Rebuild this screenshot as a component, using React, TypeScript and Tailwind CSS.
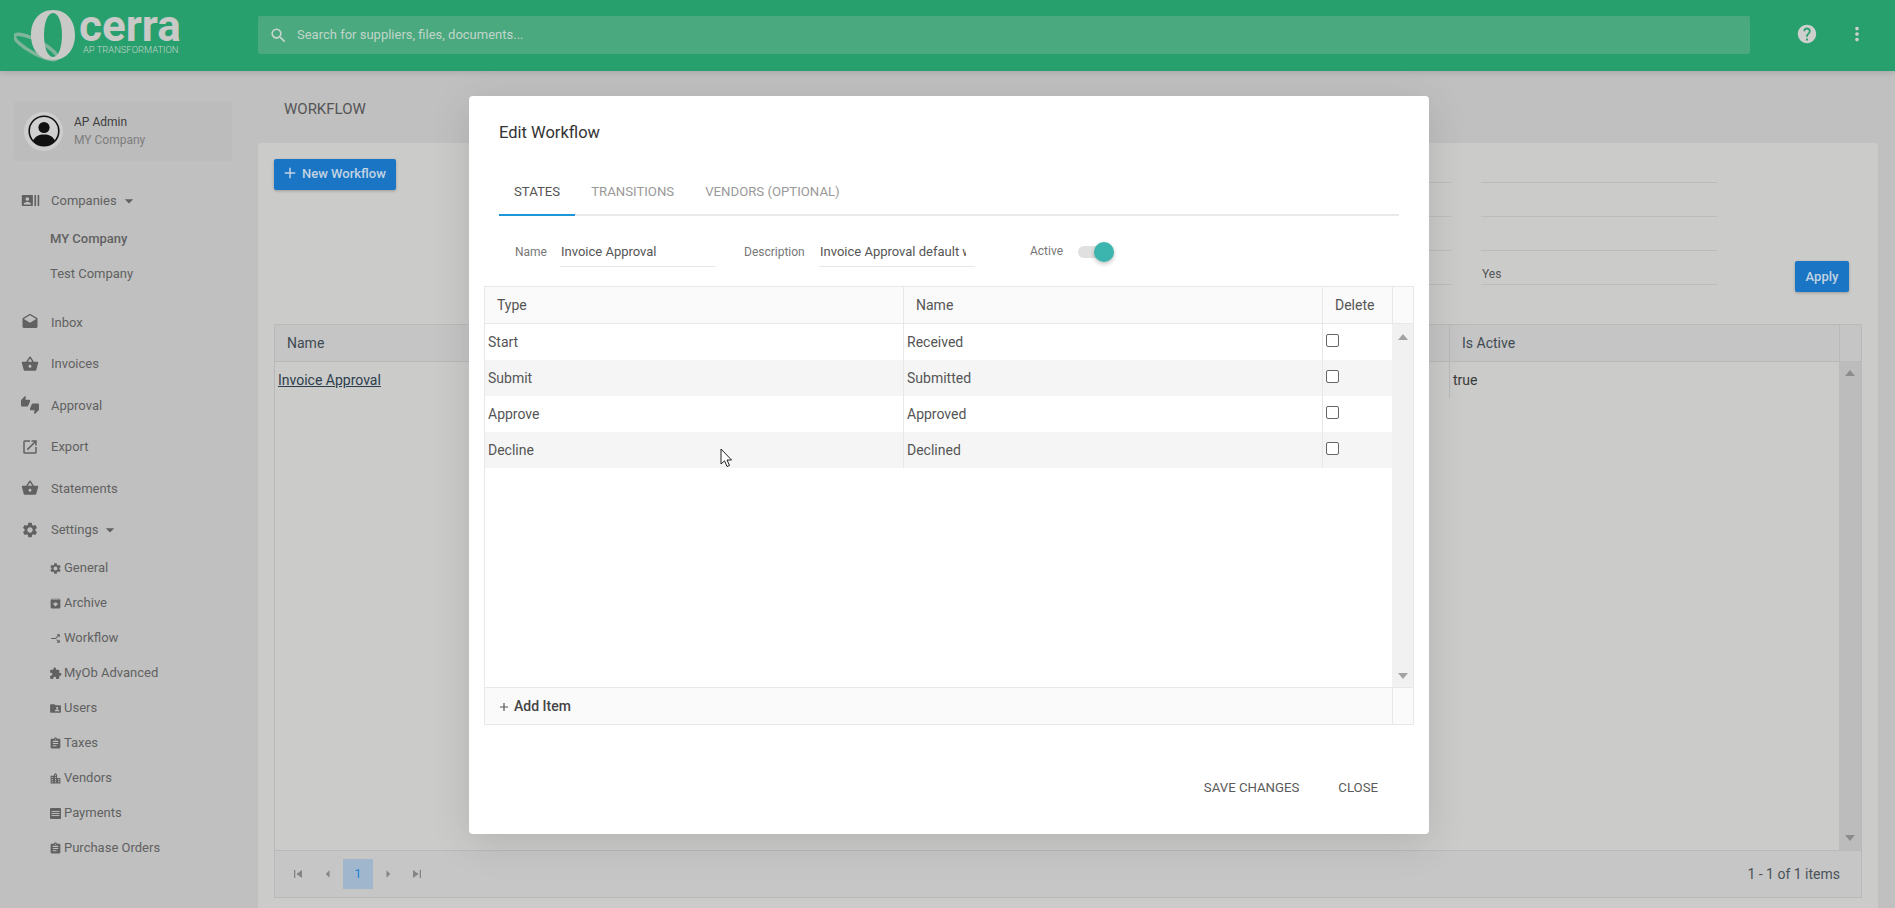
import React from "react";
import {
  MdRecentActors,
  MdDrafts,
  MdShoppingBasket,
  MdThumbsUpDown,
  MdOpenInNew,
  MdSettings,
  MdArchive,
  MdCallSplit,
  MdExtension,
  MdFolderShared,
  MdAssignment,
  MdLocationCity,
  MdSearch,
  MdHelp,
  MdMoreVert,
  MdArrowDropDown,
  MdAdd,
  MdSkipPrevious,
  MdSkipNext,
  MdArrowLeft,
  MdArrowRight,
} from "react-icons/md";

const PaymentsIcon = ({ size, className }: { size: number; className?: string }) => (
  <svg width={size} height={size} viewBox="0 0 13 13" className={className}>
    <rect x="1" y="1" width="11" height="11" rx="1" fill="currentColor" />
    <path d="M2.500 4.500h8M2.500 6.500h8M2.500 8.500h8" stroke="#c0c0c0" strokeWidth="0.9" />
  </svg>
);

const topItems = [
  { label: "Inbox", icon: MdDrafts },
  { label: "Invoices", icon: MdShoppingBasket },
  { label: "Approval", icon: MdThumbsUpDown },
  { label: "Export", icon: MdOpenInNew },
  { label: "Statements", icon: MdShoppingBasket },
];

const settingsItems = [
  { label: "General", icon: MdSettings },
  { label: "Archive", icon: MdArchive },
  { label: "Workflow", icon: MdCallSplit, rotate: true },
  { label: "MyOb Advanced", icon: MdExtension },
  { label: "Users", icon: MdFolderShared },
  { label: "Taxes", icon: MdAssignment },
  { label: "Vendors", icon: MdLocationCity },
  { label: "Payments", icon: PaymentsIcon },
  { label: "Purchase Orders", icon: MdAssignment },
];

const states = [
  { type: "Start", name: "Received" },
  { type: "Submit", name: "Submitted" },
  { type: "Approve", name: "Approved" },
  { type: "Decline", name: "Declined" },
];

const Logo = () => (
  <div className="flex h-[71px] w-[258px] shrink-0 items-start pl-[14px]">
    <svg width="62" height="71" viewBox="0 0 62 71" className="shrink-0">
      <ellipse cx="22" cy="47" rx="24" ry="6.5" transform="rotate(28 22 47)" fill="none" stroke="#7fb59b" strokeWidth="3.5" />
      <path
        fillRule="evenodd"
        fill="#c9c9c7"
        d="M39 10C53 10 61 21 61 35C61 49 53 60 39 60C25 60 17 49 17 35C17 21 25 10 39 10ZM39 13C33 13 30 24 30 35C30 46 33 57 39 57C45 57 48 46 48 35C48 24 45 13 39 13Z"
      />
    </svg>
    <div className="ml-[3px] flex flex-col">
      <span className="mt-[8px] text-[44px] leading-[36px] font-bold text-[#c9c9c7]">cerra</span>
      <span className="pl-[4px] text-[9.4px] leading-[12px] font-light whitespace-nowrap text-[#c3d3ca]">
        AP TRANSFORMATION
      </span>
    </div>
  </div>
);

const Header = () => (
  <header className="relative z-10 flex h-[71px] shrink-0 items-start bg-[#28a06e] shadow-[0_2px_6px_rgba(0,0,0,0.12)]">
    <Logo />
    <div className="mt-4 flex h-[38px] w-[1492px] items-center rounded-[2px] bg-[#4aa97f] pl-[11px]">
      <MdSearch size={19} className="text-[#c9d6cf]" />
      <span className="ml-[9px] text-[13px] text-[#c2d5ca]">Search for suppliers, files, documents...</span>
    </div>
    <MdHelp size={22} className="mt-[23px] ml-[46px] text-[#cfcfcd]" />
    <MdMoreVert size={22} className="mt-[23px] ml-[28px] text-[#cfcfcd]" />
  </header>
);

const Sidebar = () => (
  <aside className="w-[258px] shrink-0 text-[#616161]">
    <div className="mt-[30px] mr-[26px] ml-[14px] flex h-[60px] items-center rounded-[2px] bg-[#bcbcbc] pl-[10px]">
      <div className="flex size-[39px] items-center justify-center rounded-full bg-[#cdcdcd]">
        <svg width="32" height="32" viewBox="0 0 32 32">
          <circle cx="16" cy="16" r="14.8" fill="#d0d0d0" stroke="#111" strokeWidth="1.6" />
          <circle cx="16" cy="12.5" r="5.6" fill="#111" />
          <path d="M5 26c2-5 6-6.500 11-6.500s9 1.500 11 6.500c-3 3-7 4.800-11 4.800S8 29 5 26z" fill="#111" />
        </svg>
      </div>
      <div className="ml-[11px] flex flex-col">
        <span className="text-[12px] leading-[18px] text-[#3d3d3d]">AP Admin</span>
        <span className="text-[12px] leading-[18px] text-[#7c7c7c]">MY Company</span>
      </div>
    </div>

    <nav className="mt-[19px]">
      <div className="flex h-[41.5px] items-center pl-[21px] text-[13px]">
        <MdRecentActors size={19} className="mr-[11px]" />
        <span>Companies</span>
        <MdArrowDropDown size={20} className="ml-[2px]" />
      </div>
      <div className="flex h-[35px] items-center pl-[50px] text-[13px] font-medium">MY Company</div>
      <div className="flex h-[35px] items-center pl-[50px] text-[13px]">Test Company</div>
      <div className="mt-[10px]">
        {topItems.map((item) => (
          <div key={item.label} className="flex h-[41.5px] items-center pl-[21px] text-[13px]">
            <item.icon size={18} className="mr-[12px]" />
            <span>{item.label}</span>
          </div>
        ))}
        <div className="flex h-[41.5px] items-center pl-[21px] text-[13px]">
          <MdSettings size={18} className="mr-[12px]" />
          <span>Settings</span>
          <MdArrowDropDown size={20} className="ml-[2px]" />
        </div>
      </div>
      {settingsItems.map((item) => (
        <div key={item.label} className="flex h-[35px] items-center pl-[49px] text-[13px]">
          <item.icon size={13} className={item.rotate ? "mr-[2px] rotate-90" : "mr-[2px]"} />
          <span>{item.label}</span>
        </div>
      ))}
    </nav>
  </aside>
);

const FilterColumn = ({ width, last }: { width: string; last?: string }) => (
  <div className={`flex flex-col ${width}`}>
    {[0, 1, 2, 3].map((i) => (
      <div key={i} className="flex h-[34px] items-center border-b border-[#bcbcbc] pt-[12px] pl-px text-[12px] text-[#555]">
        {i === 3 ? last : ""}
      </div>
    ))}
  </div>
);

const Grid = () => (
  <div className="mx-4 flex h-[574px] flex-col border border-[#b9b9b9]">
    <div className="flex h-[37px] shrink-0 border-b border-[#b9b9b9] bg-[#c5c5c5] text-[14px] text-[#3f4a52]">
      <div className="flex flex-1 items-center pl-3">Name</div>
      <div className="flex w-[390px] items-center border-l border-[#b9b9b9] pl-3">Is Active</div>
      <div className="w-[22px] border-l border-[#b9b9b9]"></div>
    </div>
    <div className="flex min-h-0 flex-1">
      <div className="flex h-[36px] flex-1 text-[14px] text-[#3a3a3a]">
        <div className="flex flex-1 items-center pl-[3px]">
          <a className="text-[#2c3e4e] underline">Invoice Approval</a>
        </div>
        <div className="flex w-[390px] items-center border-l border-[#b9b9b9] pl-[3px]">true</div>
      </div>
      <div className="flex w-[22px] flex-col items-center justify-between bg-[#bcbcbc] pt-[8px] pb-[9px]">
        <div className="size-0 border-x-[5px] border-b-[6px] border-x-transparent border-b-[#8c8c8c]"></div>
        <div className="size-0 border-x-[5px] border-t-[6px] border-x-transparent border-t-[#8c8c8c]"></div>
      </div>
    </div>
    <div className="flex h-[47px] shrink-0 items-center border-t border-[#b9b9b9] bg-[#c6c6c6] pr-[21px] pl-[7px] text-[14px] text-[#4a5258]">
      <button className="flex w-[31px] justify-center text-[#858585]"><MdSkipPrevious size={16} /></button>
      <button className="flex w-[30px] justify-center text-[#858585]"><MdArrowLeft size={18} /></button>
      <span className="flex size-[30px] items-center justify-center bg-[#a0b6cd] text-[13px] text-[#1f87d0]">1</span>
      <button className="flex w-[29px] justify-center text-[#858585]"><MdArrowRight size={18} /></button>
      <button className="flex w-[30px] justify-center text-[#858585]"><MdSkipNext size={16} /></button>
      <span className="ml-auto">1 - 1 of 1 items</span>
    </div>
  </div>
);

const Main = () => (
  <main className="flex min-w-0 flex-1 flex-col">
    <div className="flex h-[72px] shrink-0 items-center pt-[4px] pl-[26px] text-[15px] text-[#555]">WORKFLOW</div>
    <section className="mr-[17px] flex-1 rounded-t-[2px] bg-[#cbcbc9]">
      <div className="flex h-[181px] pt-4 pr-[29px] pl-4">
        <button className="flex h-[31px] w-[122px] items-center self-start rounded-[2px] bg-[#1a76c4] pb-[2px] pl-[7px] text-[13px] font-medium text-[#c3d3e3] shadow-[0_1px_3px_rgba(0,0,0,0.25)]">
          <MdAdd size={18} className="mr-[2px] -translate-y-px" />
          <span className="ml-[1px]">New Workflow</span>
        </button>
        <div className="-mt-[10px] ml-auto flex gap-[30px]">
          <FilterColumn width="w-[200px]" />
          <FilterColumn width="w-[236px]" last="Yes" />
        </div>
        <button className="mt-[102px] ml-[78px] h-[31px] w-[54px] self-start rounded-[2px] bg-[#1a76c4] text-[13px] font-medium text-[#c3d3e3] shadow-[0_1px_3px_rgba(0,0,0,0.25)]">
          Apply
        </button>
      </div>
      <Grid />
    </section>
  </main>
);

const Field = ({ label, value, labelClass }: { label: string; value: string; labelClass: string }) => (
  <div className="flex items-center">
    <label className={`text-[12px] text-[#777] ${labelClass}`}>{label}</label>
    <input
      readOnly
      value={value}
      className="h-[31px] w-[156px] border-b border-[#e8e8e8] pr-[9px] pl-px text-[13px] text-[#555] outline-none"
    />
  </div>
);

const StatesTable = () => (
  <div className="mx-[15px] mt-[19px] flex h-[439px] flex-col border border-[#e8e8e8] text-[14px] text-[#555]">
    <div className="flex h-[37px] shrink-0 border-b border-[#e8e8e8] bg-[#fafafa]">
      <div className="flex w-[419px] items-center border-r border-[#e8e8e8] pl-3">Type</div>
      <div className="flex w-[419px] items-center border-r border-[#e8e8e8] pl-3">Name</div>
      <div className="flex w-[70px] items-center border-r border-[#e8e8e8] pl-3">Delete</div>
      <div className="flex-1"></div>
    </div>
    <div className="flex min-h-0 flex-1">
      <div className="flex-1">
        {states.map((row, i) => (
          <div key={row.type} className={`flex h-[36px] ${i % 2 === 1 ? "bg-[#f5f5f5]" : ""}`}>
            <div className="flex w-[419px] items-center border-r border-[#e8e8e8] pl-[3px]">{row.type}</div>
            <div className="flex w-[419px] items-center border-r border-[#e8e8e8] pl-[3px]">{row.name}</div>
            <div className="flex flex-1 items-start pt-[10px] pl-[3px]">
              <span className="size-[13px] rounded-[2px] border border-[#666] bg-white"></span>
            </div>
          </div>
        ))}
      </div>
      <div className="flex w-[21px] flex-col items-center justify-between bg-[#f1f1f1] pt-[10px] pb-[8px]">
        <div className="size-0 border-x-[5px] border-b-[6px] border-x-transparent border-b-[#a3a3a3]"></div>
        <div className="size-0 border-x-[5px] border-t-[6px] border-x-transparent border-t-[#a3a3a3]"></div>
      </div>
    </div>
    <div className="flex h-[37px] shrink-0 border-t border-[#e8e8e8] bg-[#fafafa]">
      <div className="flex flex-1 items-center pt-[1px] pl-[12px] text-[14px] font-medium text-[#444]">
        <MdAdd size={14} className="mr-[3px] text-[#555]" />
        Add Item
      </div>
      <div className="w-[21px] border-l border-[#e8e8e8]"></div>
    </div>
  </div>
);

const EditModal = () => (
  <div className="absolute top-[96px] left-[469px] z-20 flex h-[738px] w-[960px] flex-col rounded-[4px] bg-white shadow-[0_8px_40px_rgba(0,0,0,0.12)]">
    <h2 className="mt-[25px] ml-[30px] text-[16.5px] leading-[24px] font-normal text-[#333]">Edit Workflow</h2>
    <div className="mx-[30px] mt-[25px] flex h-[46px] shrink-0 gap-px border-b-2 border-[#e9e9e9] text-[13.2px] text-[#999]">
      <span className="-mb-[2px] flex items-center border-b-2 border-[#1c96d9] px-[15px] text-[#555]">STATES</span>
      <span className="flex items-center px-[15px]">TRANSITIONS</span>
      <span className="flex items-center px-[15px]">VENDORS (OPTIONAL)</span>
    </div>
    <div className="mt-[20px] flex h-[31px] shrink-0 items-center pl-[46px]">
      <Field label="Name" value="Invoice Approval" labelClass="w-[45px]" />
      <div className="w-[28px]"></div>
      <Field label="Description" value="Invoice Approval default workflow" labelClass="w-[75px]" />
      <span className="ml-[55px] -translate-y-px text-[12px] text-[#777]">Active</span>
      <div className="relative ml-[15px] h-[12px] w-[32px] rounded-full bg-[#e0e0e0]">
        <span className="absolute top-[-4px] right-[-4px] size-[20px] rounded-full bg-[#3cb5ae] shadow-[0_2px_4px_rgba(0,0,0,0.25)]"></span>
      </div>
    </div>
    <StatesTable />
    <div className="mt-[53px] flex justify-end pr-[51px] text-[13.2px] text-[#5a5a5a]">
      <span>SAVE CHANGES</span>
      <span className="ml-[39px]">CLOSE</span>
    </div>
    <svg width="14" height="20" viewBox="0 0 14 20" className="absolute top-[352px] left-[251px]">
      <path d="M1 1v15l3.500-3.200 2.500 5.700 2.500-1-2.500-5.500h4.500z" fill="#fff" stroke="#222" strokeWidth="1" />
    </svg>
  </div>
);

export default function App() {
  return (
    <div className="relative flex h-[908px] w-full flex-col overflow-hidden bg-[#c0c0c0] [font-family:Roboto,sans-serif]">
      <Header />
      <div className="flex min-h-0 flex-1">
        <Sidebar />
        <Main />
      </div>
      <EditModal />
    </div>
  );
}
